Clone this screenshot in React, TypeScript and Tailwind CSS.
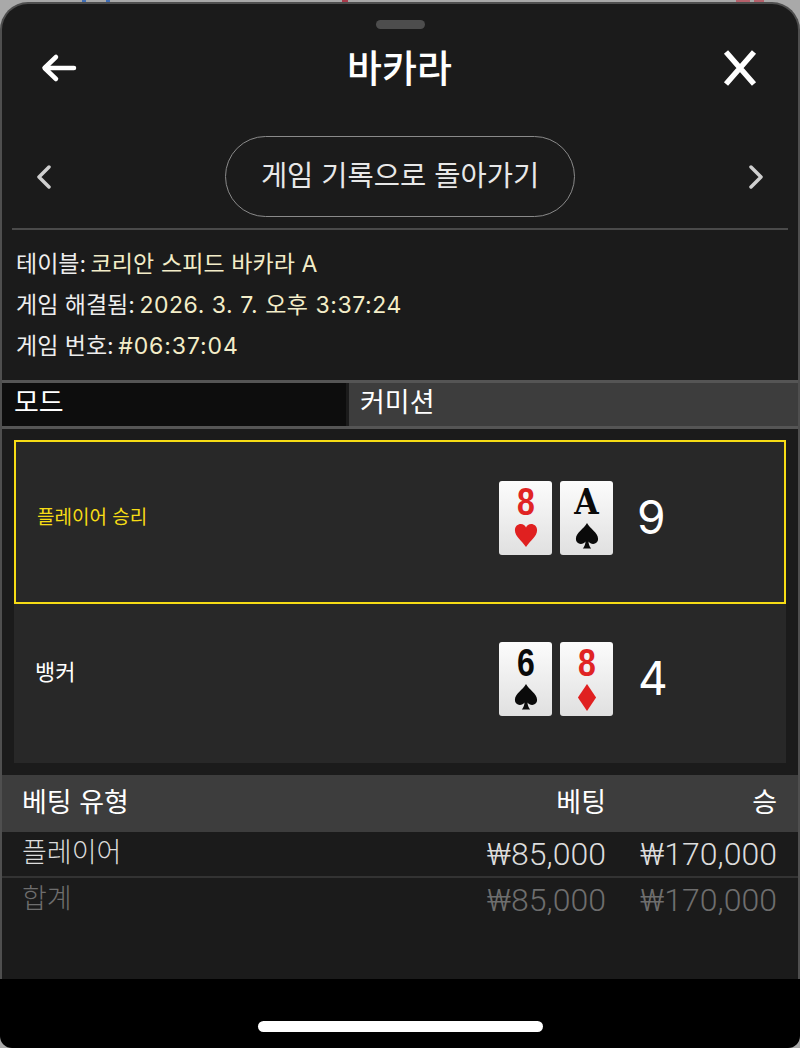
import React from "react";

const FONT = "font-['Inter','Noto_Sans_CJK_KR',sans-serif]";
const NUM = "font-['Roboto','Noto_Sans_CJK_KR',sans-serif] text-[32px] leading-none font-[350]";

function Suit({ kind }: { kind: "heart" | "spade" | "diamond" }) {
  const color = kind === "spade" ? "#0a0a0a" : "#e02020";
  if (kind === "heart")
    return (
      <svg width="24" height="25" viewBox="0 0 26 28" preserveAspectRatio="none" className="block">
        <path d="M13 27C9 20 1 15 1 8C1 3.5 4.2 1 7.4 1C10 1 12 2.6 13 5C14 2.6 16 1 18.6 1C21.8 1 25 3.5 25 8C25 15 17 20 13 27Z" fill={color} />
      </svg>
    );
  if (kind === "diamond")
    return (
      <svg width="20" height="27" viewBox="0 0 22 28" preserveAspectRatio="none" className="block">
        <path d="M11 0L21 14L11 28L1 14Z" fill={color} />
      </svg>
    );
  return (
    <svg width="24" height="26" viewBox="0 0 26 28" preserveAspectRatio="none" className="block">
      <path d="M13 0C10 6 1 10.5 1 17C1 20.5 3.5 22.5 6.3 22.5C8.5 22.5 10.3 21.5 11.4 19.8C11.2 22.8 10.3 25.3 8.5 27.5L17.5 27.5C15.7 25.3 14.8 22.8 14.6 19.8C15.7 21.5 17.5 22.5 19.7 22.5C22.5 22.5 25 20.5 25 17C25 10.5 16 6 13 0Z" fill={color} />
    </svg>
  );
}

function Card({ rank, kind, serif }: { rank: string; kind: "heart" | "spade" | "diamond"; serif?: boolean }) {
  const red = kind !== "spade";
  return (
    <div className="w-[53px] h-[74px] rounded-[3px] bg-gradient-to-b from-[#fcfcfc] to-[#e0e0e0] flex flex-col items-center pt-[4px]">
      <span
        className={`block h-[34px] leading-[34px] font-bold ${serif ? "font-['DejaVu_Serif',serif] text-[35px] scale-x-90" : "font-['Liberation_Sans',sans-serif] text-[39px] scale-x-[0.82]"} ${red ? "text-[#e02424]" : "text-[#0a0a0a]"}`}
      >
        {rank}
      </span>
      <span className="mt-[4px]">
        <Suit kind={kind} />
      </span>
    </div>
  );
}

function Row({ label, yellow, children, score }: { label: string; yellow?: boolean; children: React.ReactNode; score: string }) {
  return (
    <div className={`bg-[#282828] flex items-center ${yellow ? "h-[164px] pb-[9px] border-2 border-[#f6dc15]" : "h-[159px] pb-[10px] pl-[2px]"}`}>
      <div className={`w-[483px] ${yellow ? "pl-[21px] text-[19px] text-[#f6dc15] mt-[2px]" : "pl-[19px] text-[22px] text-white -mt-[12px]"}`}>{label}</div>
      <div className="flex gap-[8px]">{children}</div>
      <div className={`text-[46px] leading-none text-white -mt-[2px] ${yellow ? "ml-[24px]" : "ml-[25px]"}`}>{score}</div>
    </div>
  );
}

function Marks() {
  return (
    <div className="h-[2px] shrink-0 flex">
      <div className="w-[82px]" />
      <div className="w-[4px] bg-[#3f6db5]" />
      <div className="w-[20px]" />
      <div className="w-[4px] bg-[#3f6db5]" />
      <div className="w-[232px]" />
      <div className="w-[6px] bg-[#a83a4a]" />
      <div className="w-[388px]" />
      <div className="w-[14px] bg-[#b5606a]" />
      <div className="w-[4px]" />
      <div className="w-[10px] bg-[#b5606a]" />
    </div>
  );
}

export default function App() {
  return (
    <div className={`w-[800px] h-[1048px] bg-[#a9a9a9] overflow-hidden flex flex-col ${FONT}`}>
      <Marks />
      <div className="h-[977px] shrink-0 bg-[#1b1b1b] rounded-t-[28px] border-2 border-b-0 border-[#4f4f4f] flex flex-col text-white">
        <div className="mx-auto mt-[16px] w-[49px] h-[9px] rounded-full bg-[#4d4d4d]" />
        <div className="h-[76px] mt-[3px] pb-[4px] pl-[39px] pr-[40px] flex items-center justify-between">
          <svg width="36" height="30" viewBox="0 0 36 30" fill="none" stroke="white" strokeWidth="4.5" strokeLinecap="round" strokeLinejoin="round">
            <path d="M33 15H4M15 4L3.5 15L15 26" />
          </svg>
          <h1 className="text-[38px] leading-none font-medium">바카라</h1>
          <svg width="36" height="36" viewBox="0 0 36 36" fill="none" stroke="white" strokeWidth="5.5">
            <path d="M4 2L32 34M32 2L4 34" />
          </svg>
        </div>
        <div className="mt-[28px] h-[81px] flex items-center justify-between px-[33px] mb-[11px]">
          <svg width="18" height="24" viewBox="0 0 18 24" fill="none" stroke="#cfcfcf" strokeWidth="3.5" strokeLinecap="round" strokeLinejoin="round">
            <path d="M14 2L4 12L14 22" />
          </svg>
          <div className="w-[350px] h-[81px] rounded-full border border-[#8a8a8a] flex items-center justify-center text-[28.5px] text-[#e8e8e8]">
            게임 기록으로 돌아가기
          </div>
          <svg width="18" height="24" viewBox="0 0 18 24" fill="none" stroke="#cfcfcf" strokeWidth="3.5" strokeLinecap="round" strokeLinejoin="round">
            <path d="M4 2L14 12L4 22" />
          </svg>
        </div>
        <div className="mx-[10px] h-[2px] bg-[#4a4a4a]" />
        <div className="pl-[14px] pt-[14px] h-[150px] text-[23px] leading-[41px] text-[#eeeeee]">
          <div>
            테이블: <span className="-ml-[2px] tracking-[0.1px] text-[#f3edc8]">코리안 스피드 바카라 A</span>
          </div>
          <div>
            게임 해결됨: <span className="-ml-[2px] tracking-[0.55px] text-[#f3edc8]">2026. 3. 7. 오후 3:37:24</span>
          </div>
          <div>
            게임 번호: <span className="-ml-[2px] tracking-[0.9px] text-[#f3edc8]">#06:37:04</span>
          </div>
        </div>
        <div className="h-[49px] border-y-[3px] border-[#555555] flex text-[27px] leading-[40px] text-white">
          <div className="w-[344px] bg-[#0d0d0d] pl-[12px]">모드</div>
          <div className="flex-1 ml-[3px] bg-[#3d3d3d] pl-[11px]">커미션</div>
        </div>
        <div className="mx-[12px] mt-[11px]">
          <Row label="플레이어 승리" yellow score="9">
            <Card rank="8" kind="heart" />
            <Card rank="A" kind="spade" serif />
          </Row>
          <Row label="뱅커" score="4">
            <Card rank="6" kind="spade" />
            <Card rank="8" kind="diamond" />
          </Row>
        </div>
        <div className="mt-[12px] h-[57px] bg-[#3d3d3d] flex items-center pl-[20px] pr-[21px] text-[27px]">
          <div className="flex-1">베팅 유형</div>
          <div className="w-[140px] text-right">베팅</div>
          <div className="w-[171px] text-right">승</div>
        </div>
        <div className="h-[44px] flex items-center pl-[20px] pr-[21px] text-[27px] text-[#dcdcdc]">
          <div className="flex-1 -mt-[2px] font-light">플레이어</div>
          <div className={`w-[140px] text-right ${NUM}`}>₩85,000</div>
          <div className={`w-[171px] text-right ${NUM}`}>₩170,000</div>
        </div>
        <div className="h-[2px] bg-[#333333]" />
        <div className="h-[44px] flex items-center pl-[20px] pr-[21px] text-[27px] text-[#6e6e6e]">
          <div className="flex-1 -mt-[2px] font-light">합계</div>
          <div className={`w-[140px] text-right ${NUM}`}>₩85,000</div>
          <div className={`w-[171px] text-right ${NUM}`}>₩170,000</div>
        </div>
      </div>
      <div className="flex-1 bg-black rounded-b-[12px] flex items-start justify-center pt-[42px]">
        <div className="w-[285px] h-[11px] rounded-full bg-white" />
      </div>
    </div>
  );
}
